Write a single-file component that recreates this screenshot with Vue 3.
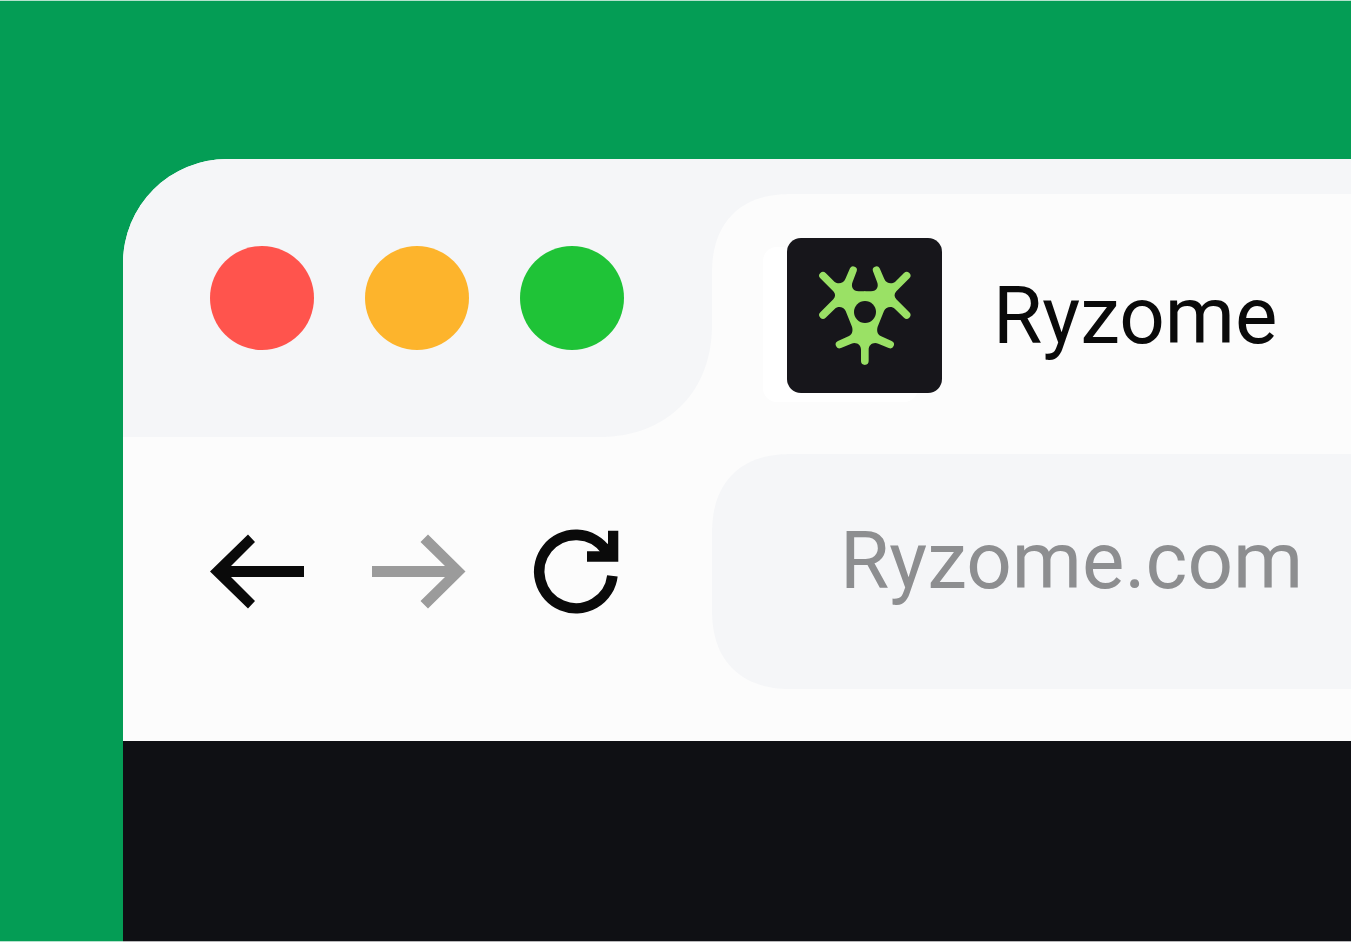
<script setup>
import { ref } from 'vue'

const address = ref('Ryzome.com')
const lights = [
  { name: 'Close', tone: 'red' },
  { name: 'Minimize', tone: 'amber' },
  { name: 'Zoom', tone: 'green' },
]
const logoHalf =
  'M166 109H146C128 108 122 94 128 80L140 49A11 11 0 0 0 120 40L106 72C100 86 84 88 74 81L47 54A11 11 0 0 0 31 70L70 109C77 116 77 126 70 133L31 172A11 11 0 0 0 47 188L74 162C84 152 101 155 107 168L126 215C129 225 128 237 117 243L84 258A11 11 0 0 0 93 279L124 266C140 260 153 270 153 284V318A11 11 0 0 0 164 329H166Z'
</script>

<template>
  <main class="page">
    <section class="window">
      <header class="strip">
        <div class="lights">
          <button
            v-for="light in lights"
            :key="light.tone"
            type="button"
            class="light"
            :class="light.tone"
            :aria-label="light.name"
          ></button>
        </div>
        <div class="tabs">
          <div class="tab">
            <svg class="favicon" viewBox="0 0 155 155" aria-hidden="true">
              <rect width="155" height="155" fill="#17161b" />
              <g transform="translate(23 17) scale(.3333)">
                <path :d="logoHalf" fill="#9ae165" />
                <path :d="logoHalf" fill="#9ae165" transform="translate(329 0) scale(-1 1)" />
                <circle cx="165" cy="171" r="33" fill="#17161b" />
              </g>
            </svg>
            <span class="title">Ryzome</span>
          </div>
        </div>
      </header>
      <nav class="toolbar">
        <div class="actions">
          <button type="button" class="action" aria-label="Back">
            <svg width="94" height="76" viewBox="0 0 94 76">
              <path d="M0 37.500L38 0.500L45 8L21 32H94V43H21L45 67L38 74.500Z" fill="currentColor" />
            </svg>
          </button>
          <button type="button" class="action muted" aria-label="Forward">
            <svg width="94" height="76" viewBox="0 0 94 76">
              <path d="M93.500 37.500L56 0.500L48.500 8L73 32H0V43H73L48.500 67L56 74.500Z" fill="currentColor" />
            </svg>
          </button>
          <button type="button" class="action" aria-label="Reload">
            <svg width="84" height="84" viewBox="0 0.500 84 84">
              <path d="M78.400 46.300A36.700 36.700 0 1 1 72 21" fill="none" stroke="currentColor" stroke-width="10.600" />
              <path d="M74 1.300H84.300V32.300H53V21.700H66L74 14Z" fill="currentColor" />
            </svg>
          </button>
        </div>
        <input v-model="address" class="address" type="text" aria-label="Address" spellcheck="false" />
      </nav>
      <div class="content"></div>
    </section>
  </main>
</template>

<style>
body {
  margin: 0;
}
</style>

<style scoped>
.page {
  position: relative;
  box-sizing: border-box;
  display: flex;
  min-height: 100vh;
  padding: 159px 0 0 123px;
  overflow: hidden;
  background: #049d55;
  font-family: Roboto, Inter, "Liberation Sans", sans-serif;
}
.page::after {
  content: "";
  position: absolute;
  inset: 0;
  border: solid rgba(255, 255, 255, 0.7);
  border-width: 1px 0;
  pointer-events: none;
}
.window {
  display: flex;
  flex: 1;
  flex-direction: column;
  min-width: 0;
  overflow: hidden;
  border-top-left-radius: 104px;
  background: #fcfcfc;
}
.strip {
  display: flex;
  height: 278px;
}
.lights {
  box-sizing: border-box;
  display: flex;
  flex: none;
  align-items: center;
  gap: 51px;
  width: 589px;
  padding-left: 87px;
  border-bottom-right-radius: 112px;
  corner-shape: superellipse(1.1);
  background: #f5f6f8;
}
.light {
  width: 104px;
  height: 104px;
  padding: 0;
  border: 0;
  border-radius: 50%;
}
.red {
  background: #ff544d;
}
.amber {
  background: #fdb42c;
}
.green {
  background: #1fc337;
}
.tabs {
  display: flex;
  flex: 1;
  min-width: 0;
  padding-top: 35px;
  background: linear-gradient(#f5f6f8 50%, #fcfcfc 50%);
}
.tab {
  display: flex;
  flex: 1;
  align-items: center;
  gap: 51px;
  min-width: 0;
  padding-left: 75px;
  border-top-left-radius: 80px;
  corner-shape: superellipse(1.23);
  background: #fcfcfc;
}
.favicon {
  flex: none;
  width: 155px;
  height: 155px;
  border-radius: 14px;
  box-shadow: -24px 9px 0 #fff;
}
.title {
  color: #0a0a0a;
  font-size: 80px;
  line-height: 100px;
}
.toolbar {
  display: flex;
  padding: 17px 0 52px 87px;
}
.actions {
  display: flex;
  flex: none;
  align-items: center;
  gap: 68px;
  width: 502px;
}
.action {
  display: flex;
  padding: 0;
  border: 0;
  background: none;
  color: #0a0a0a;
}
.action svg {
  overflow: visible;
}
.muted {
  color: #9b9b9b;
}
.address {
  box-sizing: border-box;
  flex: 1;
  min-width: 0;
  height: 235px;
  padding: 0 0 22px 128px;
  border: 0;
  border-radius: 80px 0 0 80px;
  corner-shape: superellipse(1.23);
  outline: 0;
  background: #f5f6f8;
  color: #8d8e90;
  font-family: inherit;
  font-size: 80px;
  line-height: 100px;
}
.content {
  flex: 1;
  background: #0f1014;
}
</style>
